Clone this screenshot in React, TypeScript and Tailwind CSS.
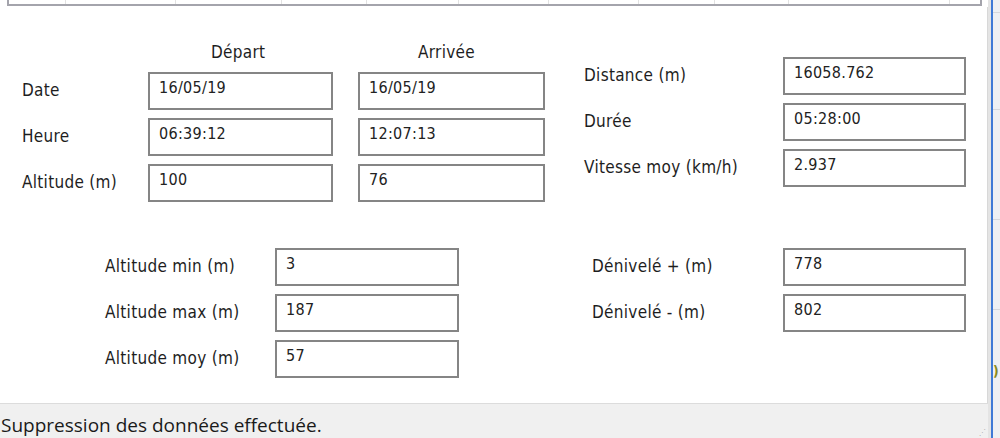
import React from 'react';

const font = { fontFamily: '"DejaVu Sans Condensed", "DejaVu Sans", sans-serif' };

function Field({ value, w = 'w-[185px]' }: { value: string; w?: string }) {
  return (
    <div className={`${w} h-[38px] border-2 border-[#858585] bg-white pl-[9px] pt-[3px] text-[16px] leading-[22px] tracking-[0.3px] text-[#222]`}>
      {value}
    </div>
  );
}

function Label({ text }: { text: string }) {
  return <div className="h-[38px] flex items-center text-[17px] tracking-[0.3px] text-[#1e1e1e] whitespace-nowrap">{text}</div>;
}

export default function App() {
  const cols = [64, 174, 280, 365, 457, 547, 637, 713, 787, 948];
  return (
    <div className="w-[1000px] h-[438px] overflow-hidden flex bg-white" style={font}>
      <div className="w-[988px] flex flex-col">
        {/* grid strip above */}
        <div className="h-[7px] pl-[7px] pr-[6px]">
          <div className="h-[6px] border-b-2 border-l-2 border-r-2 border-[#a4a4ac] flex">
            {cols.map((c, i) => (
              <div key={i} className="h-full border-r border-[#e2e2e2]" style={{ width: (i === 0 ? c - 7 : c - cols[i - 1]) + 'px' }} />
            ))}
          </div>
        </div>

        {/* main panel */}
        <div className="flex-1 border-r border-[#d8d8d8] pt-[35px]">
          <div className="flex items-start">
            {/* depart / arrivee */}
            <div className="pl-[22px]">
              <div className="flex h-[22px] items-center text-[17px] tracking-[0.3px] text-[#1e1e1e]">
                <div className="w-[126px]" />
                <div className="w-[210px] pl-[63px]">Départ</div>
                <div className="w-[187px] pl-[60px]">Arrivée</div>
              </div>
              <div className="mt-[8px] grid grid-cols-[126px_210px_187px] gap-y-[8px] content-start">
                <Label text="Date" />
                <Field value="16/05/19" />
                <Field value="16/05/19" w="w-[187px]" />
                <Label text="Heure" />
                <Field value="06:39:12" />
                <Field value="12:07:13" w="w-[187px]" />
                <Label text="Altitude (m)" />
                <Field value="100" />
                <Field value="76" w="w-[187px]" />
              </div>
            </div>

            {/* distance */}
            <div className="ml-[39px] pt-[15px] grid grid-cols-[199px_183px] gap-y-[8px] content-start">
              <Label text="Distance (m)" />
              <Field value="16058.762" w="w-[183px]" />
              <Label text="Durée" />
              <Field value="05:28:00" w="w-[183px]" />
              <Label text="Vitesse moy (km/h)" />
              <Field value="2.937" w="w-[183px]" />
            </div>
          </div>

          <div className="flex items-start mt-[46px]">
            <div className="pl-[105px] grid grid-cols-[170px_184px] gap-y-[8px] content-start">
              <Label text="Altitude min (m)" />
              <Field value="3" w="w-[184px]" />
              <Label text="Altitude max (m)" />
              <Field value="187" w="w-[184px]" />
              <Label text="Altitude moy (m)" />
              <Field value="57" w="w-[184px]" />
            </div>
            <div className="pl-[133px] grid grid-cols-[191px_183px] gap-y-[8px] content-start">
              <Label text="Dénivelé + (m)" />
              <Field value="778" w="w-[183px]" />
              <Label text="Dénivelé - (m)" />
              <Field value="802" w="w-[183px]" />
            </div>
          </div>
        </div>

        {/* status bar */}
        <div className="h-[35px] bg-[#f0f0f0] border-t border-[#dcdcdc] flex items-end justify-between">
          <div className="pl-[1px] pb-[1px] text-[19px] leading-[24px] text-[#1a1a1a]" style={{ fontFamily: '"Open Sans", "Noto Sans", sans-serif' }}>
            Suppression des données effectuée.
          </div>
          <div className="pr-[2px] pb-[1px] text-[8px] leading-[8px] text-[#b0b0b0]">⋰</div>
        </div>
      </div>

      {/* window edge to the right */}
      <div className="w-[3px] bg-[#e4e4e4]" />
      <div className="w-[2px] bg-[#3f7ad6]" />
      <div className="flex-1 bg-[#eef0f3] flex flex-col">
        <div className="h-[13px] border-b border-[#d6d8dc]" />
        <div className="h-[97px] border-b border-[#d6d8dc]" />
        <div className="h-[110px] border-b border-[#d6d8dc]" />
        <div className="h-[90px] border-b border-[#d6d8dc]" />
        <div className="h-[68px] text-[#8a8a20] text-[14px] leading-[14px] flex items-end font-bold">)</div>
      </div>
    </div>
  );
}
